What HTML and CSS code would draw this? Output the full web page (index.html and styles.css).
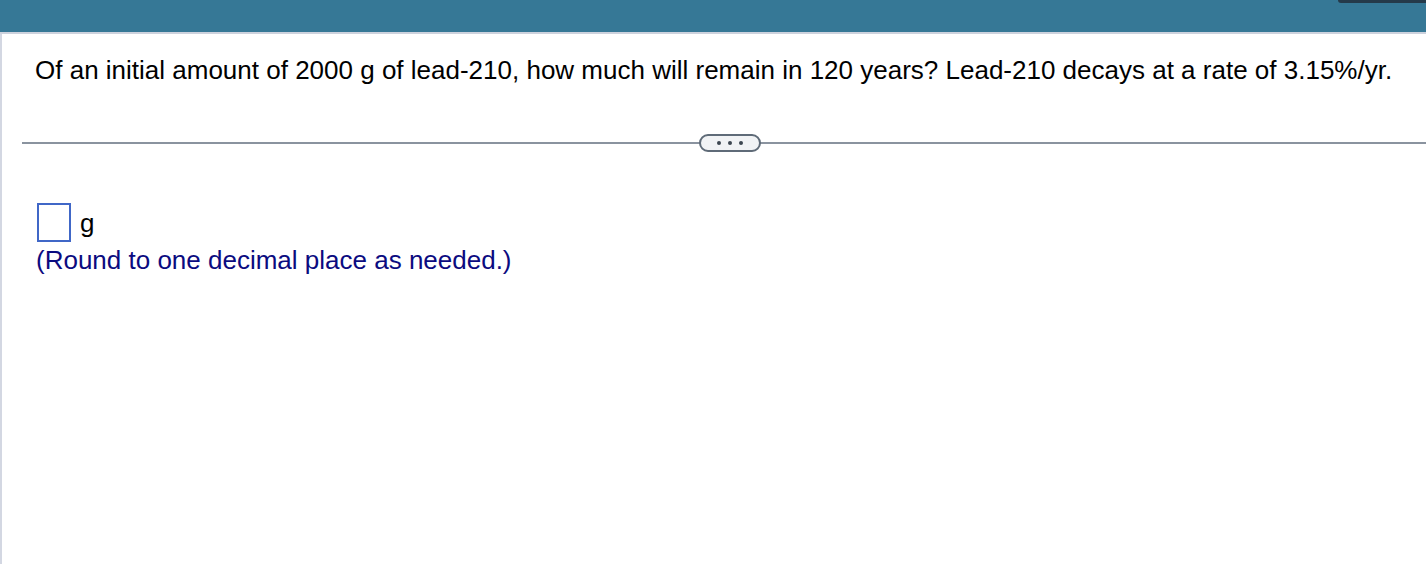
FILE: index.html
```html
<!DOCTYPE html>
<html>
<head>
<meta charset="utf-8">
<link rel="stylesheet" href="styles.css">
</head>
<body>
<div class="topbar"><div class="topbar-tab"></div></div>
<div class="page">
  <p class="question">Of an initial amount of 2000 g of lead-210, how much will remain in 120 years? Lead-210 decays at a rate of 3.15%/yr.</p>
  <div class="divider">
    <button class="more" type="button"><span class="dot"></span><span class="dot"></span><span class="dot"></span></button>
  </div>
  <div class="answer">
    <div class="answer-row"><span class="input-box"></span><span class="unit">g</span></div>
    <div class="hint">(Round to one decimal place as needed.)</div>
  </div>
</div>
</body>
</html>
```
FILE: styles.css
```css
html, body {
  margin: 0;
  padding: 0;
  background: #ffffff;
  font-family: "Liberation Sans", Arial, sans-serif;
}
.topbar {
  height: 32px;
  background: #367896;
  position: relative;
  border-bottom: 2px solid #cdd2dd;
}
.topbar-tab {
  position: absolute;
  right: 0;
  top: 0;
  width: 88px;
  height: 3px;
  background: #253a4a;
  border-bottom-left-radius: 10px;
}
.page {
  border-left: 2px solid #d3d7e2;
  height: 530px;
  box-sizing: border-box;
  padding-top: 21px;
}
.question {
  margin: 0 0 0 33px;
  font-size: 26px;
  line-height: 30px;
  color: #000;
}
.divider {
  margin-top: 57px;
  margin-left: 20px;
  height: 2px;
  background: #8a939f;
  position: relative;
}
.more {
  position: absolute;
  left: 677px;
  top: -8px;
  width: 62px;
  height: 18px;
  box-sizing: border-box;
  border: 2px solid #5f6b78;
  border-radius: 9px;
  background: #f1f3f5;
  padding: 0;
  display: flex;
  align-items: center;
  justify-content: center;
  gap: 7px;
}
.dot {
  width: 4px;
  height: 4px;
  border-radius: 50%;
  background: #3c4650;
}
.answer {
  margin-top: 59px;
  margin-left: 35px;
}
.answer-row {
  display: flex;
  align-items: flex-start;
  gap: 9px;
}
.input-box {
  width: 34px;
  height: 39px;
  box-sizing: border-box;
  border: 2px solid #4067c7;
}
.unit {
  font-size: 26px;
  line-height: 26px;
  margin-top: 7px;
  color: #000;
}
.hint {
  font-size: 26px;
  line-height: 30px;
  color: #0b0b80;
  margin-top: 3px;
  margin-left: -1px;
}
```
